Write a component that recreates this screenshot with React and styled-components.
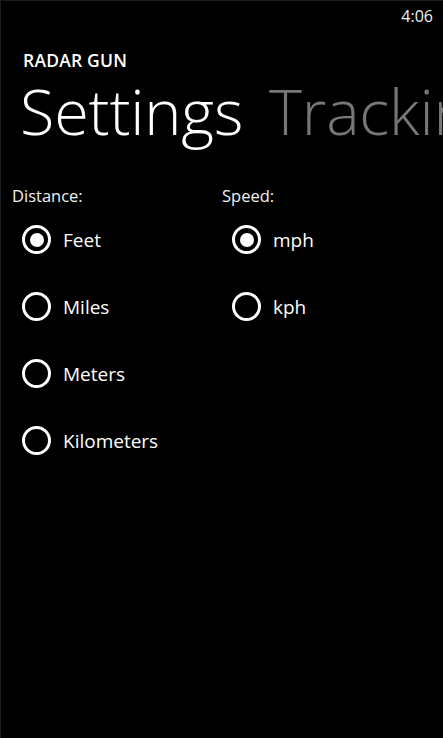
import { useState } from "react";
import styled, { createGlobalStyle } from "styled-components";

const GlobalStyle = createGlobalStyle`
  html, body {
    margin: 0;
    padding: 0;
    background: #000;
  }
  body {
    font-family: "Open Sans", "Noto Sans", sans-serif;
    color: #fff;
  }
`;

const Screen = styled.div`
  width: 443px;
  height: 738px;
  box-sizing: border-box;
  background: #000;
  border-top: 1px solid #1c1c1c;
  border-left: 1px solid #1c1c1c;
  overflow: hidden;
  display: flex;
  flex-direction: column;
`;

const StatusBar = styled.div`
  height: 29px;
  display: flex;
  justify-content: flex-end;
  align-items: center;
  padding-right: 10px;
  font-size: 16px;
  color: #f2f2f2;
`;

const AppTitle = styled.div`
  margin: 20px 0 0 22px;
  font-size: 17.5px;
  font-weight: 600;
  line-height: 20px;
  letter-spacing: 0.2px;
`;

const Pivot = styled.div`
  display: flex;
  gap: 26px;
  margin: 9px 0 0 19px;
  white-space: nowrap;
  font-size: 63px;
  font-weight: 300;
  line-height: 64px;
  letter-spacing: -0.2px;
`;

const PivotItem = styled.span`
  color: ${({ active }) => (active ? "#fff" : "#777")};
`;

const Columns = styled.div`
  display: grid;
  grid-template-columns: 210px 1fr;
  padding: 41px 0 0 11px;
`;

const Group = styled.div`
  display: flex;
  flex-direction: column;
`;

const GroupLabel = styled.div`
  font-size: 16.5px;
  line-height: 24px;
  color: #f0f0f0;
  margin-bottom: 7px;
`;

const Option = styled.label`
  display: flex;
  align-items: center;
  gap: 12px;
  height: 67px;
  margin-top: ${({ first }) => (first ? "-9px" : "0")};
  padding-left: 10px;
  font-size: 19px;
  cursor: pointer;
`;

const Ring = styled.span`
  width: 23px;
  height: 23px;
  border: 3px solid #fff;
  border-radius: 50%;
  display: flex;
  align-items: center;
  justify-content: center;
  flex-shrink: 0;

  &::after {
    content: "";
    width: 14px;
    height: 14px;
    border-radius: 50%;
    background: #fff;
    display: ${({ checked }) => (checked ? "block" : "none")};
  }
`;

const RadioGroup = ({ label, options, value, onChange }) => (
  <Group>
    <GroupLabel>{label}</GroupLabel>
    {options.map((o, i) => (
      <Option key={o} first={i === 0} onClick={() => onChange(o)}>
        <Ring checked={value === o} />
        {o}
      </Option>
    ))}
  </Group>
);

const App = () => {
  const [distance, setDistance] = useState("Feet");
  const [speed, setSpeed] = useState("mph");

  return (
    <Screen>
      <GlobalStyle />
      <StatusBar>4:06</StatusBar>
      <AppTitle>RADAR GUN</AppTitle>
      <Pivot>
        <PivotItem active>Settings</PivotItem>
        <PivotItem>Tracking</PivotItem>
      </Pivot>
      <Columns>
        <RadioGroup
          label="Distance:"
          options={["Feet", "Miles", "Meters", "Kilometers"]}
          value={distance}
          onChange={setDistance}
        />
        <RadioGroup
          label="Speed:"
          options={["mph", "kph"]}
          value={speed}
          onChange={setSpeed}
        />
      </Columns>
    </Screen>
  );
};

export default App;
